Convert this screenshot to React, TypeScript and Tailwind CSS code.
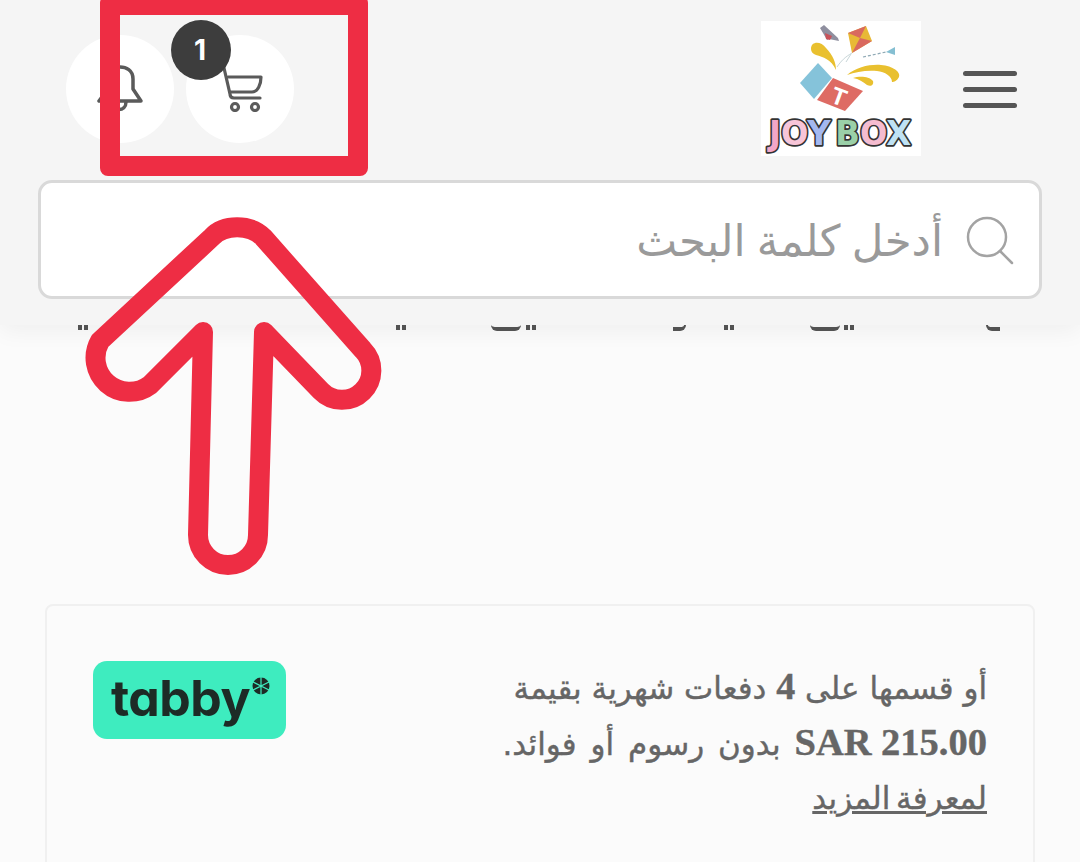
import React from "react";

function Logo() {
  return (
    <div className="relative w-[160px] h-[135px] bg-white overflow-hidden">
      <svg viewBox="0 0 160 135" className="absolute inset-0 w-full h-full">
        <path d="M59 7 L63 4 L77 17 L78 20 L68 18 L66 19 L62 12 Z" fill="#8f8f9f" />
        <path d="M64 12 L71 15 L69 19 L65 18 Z" fill="#c9525a" />
        <path d="M105 5 L111 20 L91 32 L87 12 Z" fill="#e8b936" />
        <path d="M105 5 L99 17 L87 12 Z" fill="#d9695f" />
        <path d="M99 17 L111 20 L91 32 Z" fill="#d9695f" />
        <path d="M91 32 C84 36 80 40 76 46 M90 33 L85 41" stroke="#c8d6d8" strokeWidth="1" fill="none" />
        <path d="M102 36 L125 31" stroke="#8fa9b5" strokeWidth="1.2" strokeDasharray="3 2" />
        <path d="M125 31 L134 26 L134 34 Z" fill="#85bfd2" />
        <path d="M50 28 C50 20 60 20 65 27 C72 34 75 42 75 49 C70 38 62 36 55 34 C52 33 50 31 50 28 Z" fill="#e9c02f" />
        <path d="M86 54 C95 46 110 43 120 44 C132 45 140 51 138 56 C136 60 133 61 131 61 C131 55 124 51 116 50 C105 49 95 51 86 54 Z" fill="#e9c02f" />
        <path d="M92 57 C98 55 108 55 112 60 C113 64 110 66 106 64 C102 61 98 58 92 57 Z" fill="#e9c02f" />
        <path d="M57 42 L71 57 L53 78 L39 62 Z" fill="#85c3da" />
        <path d="M72 57 L102 70 L84 90 L56 79 Z" fill="#de6b64" />
        <text x="78" y="84" textAnchor="middle" fontFamily="'Liberation Sans', sans-serif" fontWeight="700" fontSize="24" fill="#fff" transform="rotate(20 78 76)">T</text>
        <text x="79" y="124" textAnchor="middle" fontFamily="'DejaVu Sans', sans-serif" fontWeight="700" fontSize="34" stroke="#333" strokeWidth="3.4" paintOrder="stroke" strokeLinejoin="round" textLength="142" lengthAdjust="spacingAndGlyphs">
          <tspan fill="#f3a6c8">J</tspan>
          <tspan fill="#f7c5d8">O</tspan>
          <tspan fill="#a4b8f0">Y</tspan>
          <tspan dx="5" fill="#9ad0a8">B</tspan>
          <tspan fill="#f5bcd0">O</tspan>
          <tspan fill="#bfe2f4">X</tspan>
        </text>
      </svg>
    </div>
  );
}

function Dots({ className }: { className: string }) {
  return (
    <span className={`absolute top-0 flex gap-[2px] ${className}`}>
      <span className="w-[4px] h-[5px] bg-[#555]" />
      <span className="w-[4px] h-[5px] bg-[#555]" />
    </span>
  );
}

export default function App() {
  return (
    <div className="relative w-[1080px] h-[862px] overflow-hidden bg-[#fbfbfb] font-['DejaVu_Sans',sans-serif]">
      <div className="relative h-[337px]">
        <div className="absolute inset-x-0 top-[325px] h-[12px]">
          <Dots className="left-[78px]" />
          <Dots className="left-[396px]" />
          <span className="absolute left-[491px] top-0 w-[30px] h-[6px] border-b-[4px] border-[#555] rounded-b-[14px]" />
          <Dots className="left-[526px]" />
          <span className="absolute left-[673px] top-0 w-[13px] h-[6px] border-b-[4px] border-r-[2px] border-[#555] rounded-br-[10px]" />
          <Dots className="left-[724px]" />
          <span className="absolute left-[810px] top-0 w-[30px] h-[6px] border-b-[4px] border-[#555] rounded-b-[14px]" />
          <Dots className="left-[844px]" />
          <span className="absolute left-[986px] top-0 w-[14px] h-[6px] border-b-[4px] border-l-[2px] border-[#555] rounded-bl-[10px]" />
        </div>
        <header className="relative bg-[#f5f5f5] h-[325px] px-[38px] pt-[21px] shadow-[0_6px_22px_rgba(0,0,0,0.05)]">
          <div className="flex items-center justify-between h-[135px] pl-[28px] pr-[25px]">
            <div className="flex gap-3">
              <div className="w-[108px] h-[108px] rounded-full bg-white flex items-center justify-center">
                <svg width="46" height="50" viewBox="0 0 46 50" fill="none" stroke="#5a5a5a" strokeWidth="3.5" strokeLinejoin="round" strokeLinecap="round">
                  <path d="M2 37 L44 37 L36 25 L36 15 C36 6 29 3 23 3 C17 3 10 7 10 15 L10 26 Z" />
                  <path d="M15 38 C15 48 29 48 29 38" />
                </svg>
              </div>
              <div className="relative w-[108px] h-[108px] rounded-full bg-white flex items-center justify-center">
                <svg width="46" height="46" viewBox="0 0 46 46" fill="none" stroke="#5a5a5a" strokeWidth="3.2" strokeLinejoin="round" strokeLinecap="round">
                  <path d="M7 2 L13 28 C13 31 15 32 17 32 L43 32" />
                  <path d="M11 11 L44 11 C44 18 41 26 35 26 L13 26" />
                  <circle cx="18" cy="41" r="3.5" />
                  <circle cx="38" cy="41" r="3.5" />
                </svg>
                <div className="absolute left-[-15px] top-[-15px] w-[60px] h-[60px] rounded-full bg-[#3d3d3d] text-white flex items-center justify-center text-[28px] font-bold font-['Inter',sans-serif] pr-[2px]">1</div>
              </div>
            </div>
            <div className="flex items-center gap-[42px]">
              <Logo />
              <div className="flex flex-col gap-[11px] w-[54px] mt-[1px]">
                <span className="h-[5px] rounded-full bg-[#555]" />
                <span className="h-[5px] rounded-full bg-[#555]" />
                <span className="h-[5px] rounded-full bg-[#555]" />
              </div>
            </div>
          </div>
          <div dir="rtl" className="mt-[24px] h-[119px] bg-white border-[3px] border-[#d9d9d9] rounded-[14px] flex items-center pr-[24px] gap-[22px]">
            <svg width="50" height="50" viewBox="0 0 50 50" fill="none" stroke="#a3a3a3" strokeWidth="2.5" strokeLinecap="round">
              <circle cx="22" cy="22" r="19" />
              <path d="M35 36 L47 48" />
            </svg>
            <span className="text-[#9a9a9a] text-[43.5px] leading-none font-['Noto_Sans','DejaVu_Sans',sans-serif]">أدخل كلمة البحث</span>
          </div>
        </header>
      </div>
      <section className="mx-[45px] mt-[267px] h-[300px] border-2 border-[#f0f0f0] rounded-[8px] pl-[46px] pr-[46px] pt-[55px] flex justify-between">
        <div className="w-[193px] h-[78px] rounded-[14px] bg-[#3eecbf] flex items-center justify-center gap-[2px] pl-[2px]">
          <span className="text-[#1d2b26] text-[50px] font-bold leading-none tracking-[-0.5px] font-['Inter',sans-serif] [font-feature-settings:'cv11'] -mt-1">tabby</span>
          <svg width="18" height="18" viewBox="0 0 18 18" className="-mt-7">
            <circle cx="9" cy="9" r="8.5" fill="#1d2b26" />
            <path d="M9 0 V18 M1 5 L17 13 M17 5 L1 13" stroke="#3eecbf" strokeWidth="1.2" />
          </svg>
        </div>
        <div dir="rtl" className="text-[#666] text-[31px] leading-[54px] -mt-[2px] font-['DejaVu_Sans',sans-serif] [-webkit-text-stroke:0.4px_#666]">
          <p>أو قسمها على <span className="font-['Liberation_Serif',serif] font-bold text-[38px]">4</span> دفعات شهرية بقيمة</p>
          <p className="[word-spacing:4px]"><span dir="ltr" className="font-['Liberation_Serif',serif] font-bold text-[38.5px] [word-spacing:0]">SAR 215.00</span> بدون رسوم أو فوائد.</p>
          <p className="underline [word-spacing:-4px]">لمعرفة المزيد</p>
        </div>
      </section>
      <div className="absolute left-[100px] top-[-5px] w-[268px] h-[181px] border-[20px] border-[#ee2d44] rounded-[8px]" />
      <svg className="absolute inset-0 pointer-events-none" width="1080" height="862" fill="none">
        <path d="M263 237 L363 350 A28.5 28.5 0 0 1 321 391 L264 332 L258 535 A30 30 0 0 1 198 535 L203 332 L150 385 A34 34 0 0 1 100 341 L212 237 C224 224 250 224 263 237 Z" stroke="#ee2d44" strokeWidth="20" strokeLinejoin="round" />
      </svg>
    </div>
  );
}
